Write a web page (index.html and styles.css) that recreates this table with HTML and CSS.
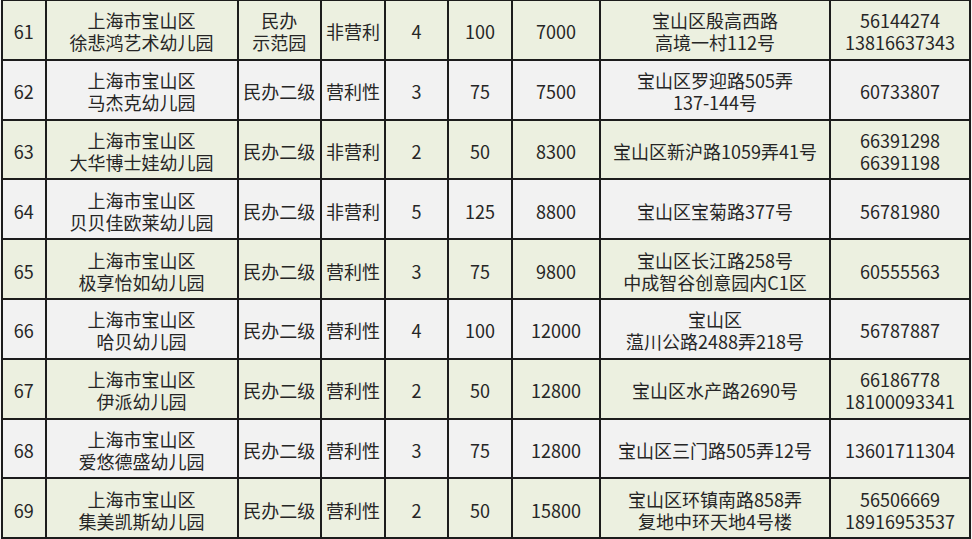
FILE: index.html
```html
<!DOCTYPE html>
<html lang="zh-CN">
<head>
<meta charset="utf-8">
<title>宝山区幼儿园</title>
<link rel="stylesheet" href="styles.css">
</head>
<body>
<table class="tbl">
<colgroup>
<col class="c1"><col class="c2"><col class="c3"><col class="c4"><col class="c5"><col class="c6"><col class="c7"><col class="c8"><col class="c9">
</colgroup>
<tbody>
<tr class="g"><td>61</td><td>上海市宝山区<br>徐悲鸿艺术幼儿园</td><td>民办<br>示范园</td><td>非营利</td><td>4</td><td>100</td><td>7000</td><td>宝山区殷高西路<br>高境一村112号</td><td>56144274<br>13816637343</td></tr>
<tr class="w"><td>62</td><td>上海市宝山区<br>马杰克幼儿园</td><td>民办二级</td><td>营利性</td><td>3</td><td>75</td><td>7500</td><td>宝山区罗迎路505弄<br>137-144号</td><td>60733807</td></tr>
<tr class="g"><td>63</td><td>上海市宝山区<br>大华博士娃幼儿园</td><td>民办二级</td><td>非营利</td><td>2</td><td>50</td><td>8300</td><td>宝山区新沪路1059弄41号</td><td>66391298<br>66391198</td></tr>
<tr class="w"><td>64</td><td>上海市宝山区<br>贝贝佳欧莱幼儿园</td><td>民办二级</td><td>非营利</td><td>5</td><td>125</td><td>8800</td><td>宝山区宝菊路377号</td><td>56781980</td></tr>
<tr class="g"><td>65</td><td>上海市宝山区<br>极享怡如幼儿园</td><td>民办二级</td><td>营利性</td><td>3</td><td>75</td><td>9800</td><td>宝山区长江路258号<br>中成智谷创意园内C1区</td><td>60555563</td></tr>
<tr class="w"><td>66</td><td>上海市宝山区<br>哈贝幼儿园</td><td>民办二级</td><td>营利性</td><td>4</td><td>100</td><td>12000</td><td>宝山区<br>蕰川公路2488弄218号</td><td>56787887</td></tr>
<tr class="g"><td>67</td><td>上海市宝山区<br>伊派幼儿园</td><td>民办二级</td><td>营利性</td><td>2</td><td>50</td><td>12800</td><td>宝山区水产路2690号</td><td>66186778<br>18100093341</td></tr>
<tr class="w"><td>68</td><td>上海市宝山区<br>爱悠德盛幼儿园</td><td>民办二级</td><td>营利性</td><td>3</td><td>75</td><td>12800</td><td>宝山区三门路505弄12号</td><td>13601711304</td></tr>
<tr class="g"><td>69</td><td>上海市宝山区<br>集美凯斯幼儿园</td><td>民办二级</td><td>营利性</td><td>2</td><td>50</td><td>15800</td><td>宝山区环镇南路858弄<br>复地中环天地4号楼</td><td>56506669<br>18916953537</td></tr>
</tbody>
</table>
</body>
</html>
```
FILE: styles.css
```css
html, body {
  margin: 0;
  padding: 0;
  background: #f6f6f4;
}
body {
  overflow: hidden;
  font-family: "Noto Sans CJK SC", "Noto Sans", sans-serif;
  color: #262626;
}
.tbl {
  border-collapse: collapse;
  table-layout: fixed;
  width: 970px;
  margin: -1px 0 0 1px;
}
.c1 { width: 43.5px; }
.c2 { width: 192px; }
.c3 { width: 83.5px; }
.c4 { width: 64px; }
.c5 { width: 63px; }
.c6 { width: 64px; }
.c7 { width: 88px; }
.c8 { width: 230px; }
.c9 { width: 140px; }
.tbl td {
  box-sizing: border-box;
  border: 2px solid #1c1c1c;
  height: 59.8px;
  padding: 3px 1px 0;
  text-align: center;
  vertical-align: middle;
  font-size: 18px;
  line-height: 22px;
  white-space: nowrap;
  overflow: hidden;
}
.tbl tr.g td { background: #ecf0e0; }
.tbl tr.w td { background: #f2f2f2; }
```
